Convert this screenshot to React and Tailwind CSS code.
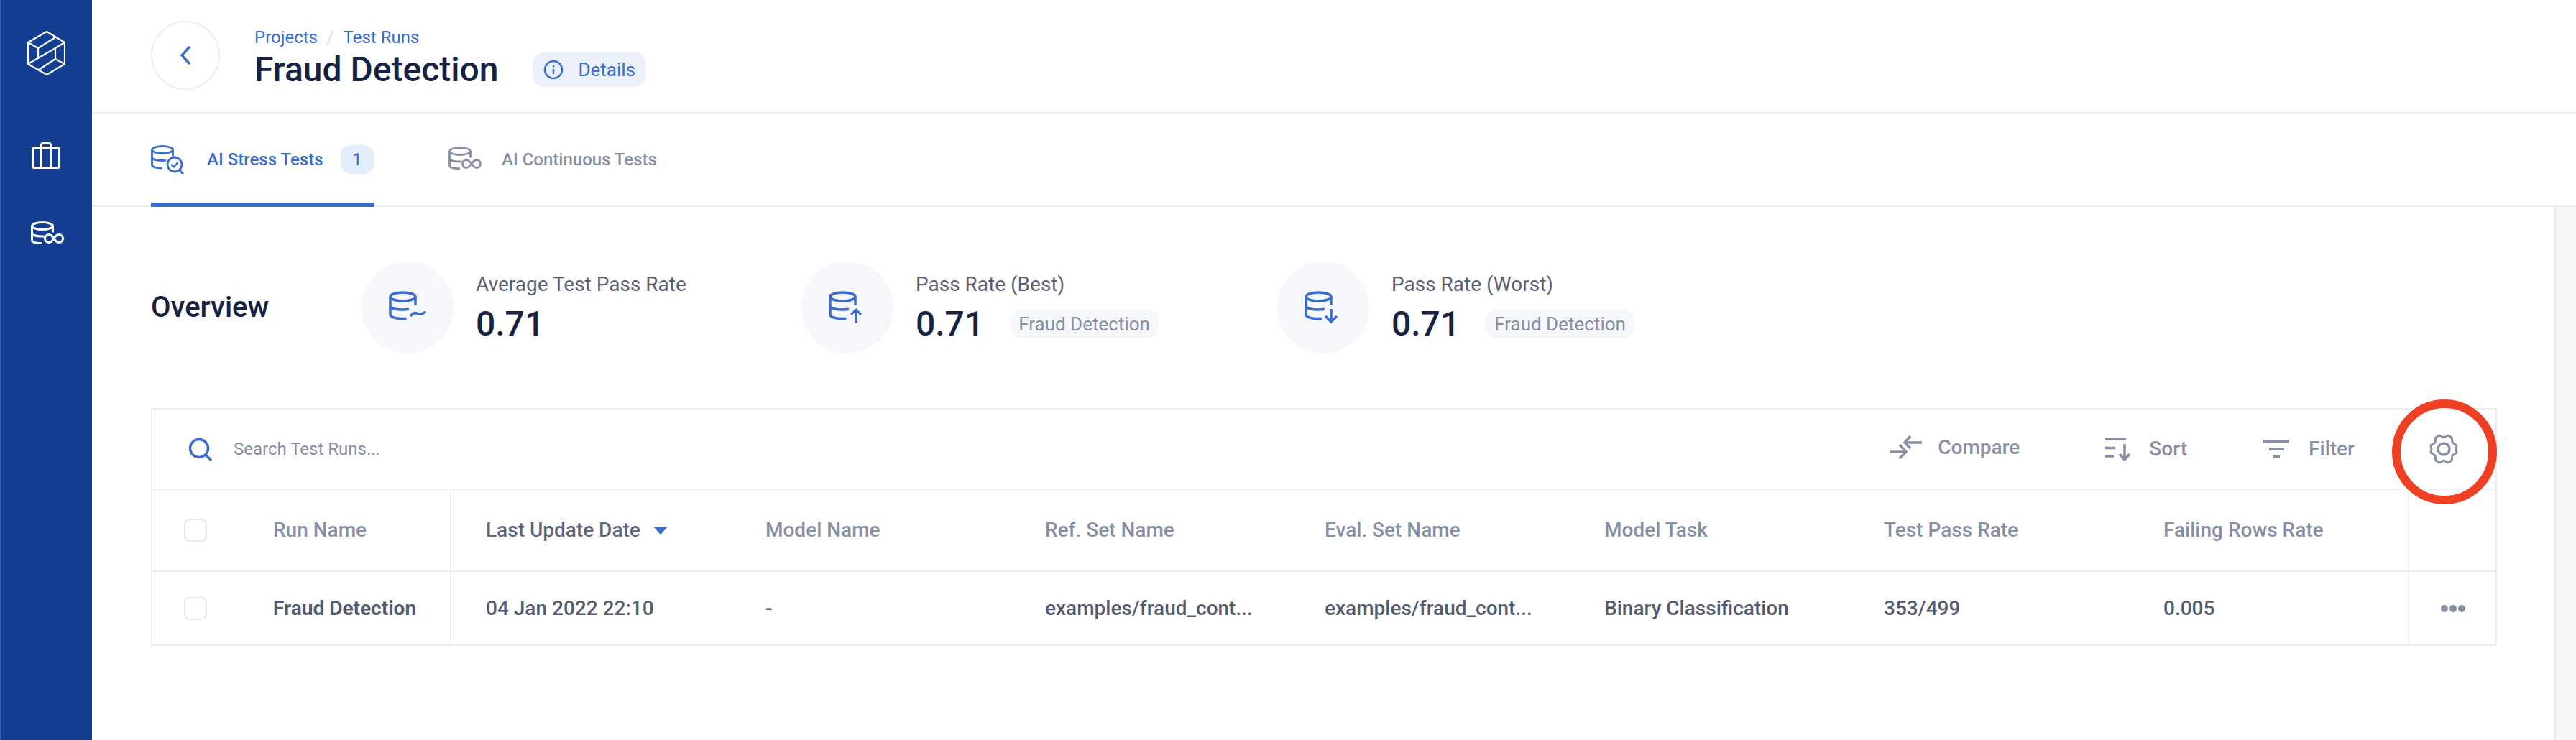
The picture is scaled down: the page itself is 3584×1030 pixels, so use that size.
import React from "react";

const BLUE = "#3A6CCB";
const GREY = "#878FA3";

function DbPaths({ color, sw = 3.5, s = 1 }) {
  return (
    <g fill="none" stroke={color} strokeWidth={sw} strokeLinecap="butt" transform={`scale(${s})`}>
      <ellipse cx="19.5" cy="10" rx="17.5" ry="6" />
      <path d="M2 10v25c0 3.400 8 5.600 17.500 5.600 2 0 3.500-.1 5-.3" />
      <path d="M37 10v12" />
      <path d="M2 22.500c0 3.400 8 5.600 17.500 5.600 3 0 6-.3 8.500-.8" />
    </g>
  );
}

function StatIcon({ kind }) {
  return (
    <svg width="52" height="50" viewBox="0 0 52 50">
      <DbPaths color={BLUE} />
      {kind === "avg" && <path d="M31 36c3-4 6-4 9-2.500s6 1.500 10-2" fill="none" stroke={BLUE} strokeWidth="3.500" strokeLinecap="round" />}
      {kind === "up" && <path d="M38 47V28M31 35l7-7 7 7" fill="none" stroke={BLUE} strokeWidth="3" />}
      {kind === "down" && <path d="M37 27v18M29 37l8 8 8-8" fill="none" stroke={BLUE} strokeWidth="3.500" />}
    </svg>
  );
}

function TabStressIcon() {
  return (
    <svg width="46" height="40" viewBox="0 0 46 40" fill="none" stroke={BLUE} strokeWidth="2.800" className="shrink-0">
      <ellipse cx="16" cy="6.500" rx="14.500" ry="5" />
      <path d="M1.500 6.500v21c0 2.700 6 4.500 14.500 4.500" />
      <path d="M30.500 6.500v9" />
      <path d="M1.500 17c0 2.700 6 4.500 14.500 4.500 2 0 3.500-.1 5-.4" />
      <circle cx="33" cy="27" r="10" />
      <path d="M40 35l5 5.500" />
      <path d="M28.500 27l3.500 3.500 5.500-6.500" strokeWidth="2.500" />
    </svg>
  );
}

function TabInfIcon({ color, sw = 2.800, className = "" }) {
  return (
    <svg width="46" height="32" viewBox="0 0 46 32" fill="none" stroke={color} strokeWidth={sw} className={`shrink-0 ${className}`}>
      <ellipse cx="16" cy="6.500" rx="14.500" ry="5" />
      <path d="M1.500 6.500v20c0 2.700 6 4.200 14.500 4.200" />
      <path d="M30.500 6.500v9" />
      <path d="M1.500 16.500c0 2.700 6 4.500 14.500 4.500 1 0 1.800 0 2.500-.1" />
      <path d="M32 24c-2.500-3.500-4-5.500-7-5.500a5.500 5.500 0 0 0 0 11c3 0 4.500-2 7-5.500s4-5.500 7-5.500a5.500 5.500 0 0 1 0 11c-3 0-4.500-2-7-5.500z" />
    </svg>
  );
}

function Logo() {
  return (
    <svg width="53" height="62" viewBox="-1 -1 53 62" fill="none" stroke="#fff" strokeWidth="2.200" strokeLinejoin="round">
      <path d="M26 0l25 15v30L26 60 0 45V15z" />
      <path d="M0 15l14 8v15M14 23L38 8M0 45L38 23l13-8M38 23v15l13 7M38 38L15 53" />
    </svg>
  );
}

function Briefcase() {
  return (
    <svg width="40" height="37" viewBox="0 0 40 37" fill="none" stroke="#fff" strokeWidth="3">
      <rect x="1.500" y="7.500" width="37" height="28" rx="2" />
      <path d="M13.500 7.500v28M26.500 7.500v28M13.500 7.500V4c0-1.500 1-2.500 2.500-2.500h8c1.500 0 2.500 1 2.500 2.500v3.500" />
    </svg>
  );
}

function Stat({ width, kind, label, pill }) {
  return (
    <div className="flex items-center shrink-0" style={{ width }}>
      <div className="w-[128px] h-[128px] rounded-full bg-[#F5F7FB] flex items-center justify-center shrink-0">
        <StatIcon kind={kind} />
      </div>
      <div className="ml-[31px] flex flex-col pt-[2px]">
        <div className="text-[28px] leading-[36px] text-[#5B6070]">{label}</div>
        <div className="flex items-center mt-[7px]">
          <span className="text-[48px] leading-[60px] font-medium text-[#172243]">0.71</span>
          {pill && (
            <span className="ml-[36px] h-[40px] px-[12px] rounded-[16px] bg-[#F5F7FB] text-[26px] leading-[40px] text-[#878FA3]">
              Fraud Detection
            </span>
          )}
        </div>
      </div>
    </div>
  );
}

function Checkbox() {
  return <div className="w-[32px] h-[32px] rounded-[8px] border-2 border-[#E4E8EF] bg-white shrink-0" />;
}

const columns = [
  { head: "Last Update Date", val: "04 Jan 2022 22:10", active: true },
  { head: "Model Name", val: "-" },
  { head: "Ref. Set Name", val: "examples/fraud_cont..." },
  { head: "Eval. Set Name", val: "examples/fraud_cont..." },
  { head: "Model Task", val: "Binary Classification" },
  { head: "Test Pass Rate", val: "353/499" },
];

export default function App() {
  return (
    <div className="flex w-[3584px] h-[1030px] bg-white overflow-hidden font-['Roboto',sans-serif]">
      <aside className="w-[128px] shrink-0 h-full bg-[#133E91] border-l-2 border-[#3A66AE] flex flex-col items-center">
        <div className="mt-[43px] -ml-[2px]"><Logo /></div>
        <div className="mt-[93px] -ml-[2px]"><Briefcase /></div>
        <div className="mt-[73px] ml-[1px]"><TabInfIcon color="#fff" sw={3} /></div>
      </aside>

      <main className="flex-1 flex flex-col min-w-0">
        <header className="h-[158px] shrink-0 border-b-2 border-[#E9EDF4] pl-[82px] flex items-start">
          <button className="mt-[29px] w-[96px] h-[96px] rounded-full border-2 border-[#E9EDF4] flex items-center justify-center shrink-0">
            <svg width="18" height="28" viewBox="0 0 18 28" fill="none" stroke={BLUE} strokeWidth="3.500">
              <path d="M15 2L4 14l11 12" />
            </svg>
          </button>
          <div className="ml-[48px] pt-[38px]">
            <div className="flex items-center text-[24px] leading-[28px] text-[#3A6CCB]">
              <span>Projects</span>
              <span className="mx-[12px] text-[#E1E5EC] text-[28px]">/</span>
              <span>Test Runs</span>
            </div>
            <div className="flex items-center mt-[3px]">
              <h1 className="text-[48px] leading-[56px] font-medium text-[#172243]">Fraud Detection</h1>
              <div className="ml-[48px] h-[48px] w-[158px] rounded-[16px] bg-[#EBF0FA] flex items-center pl-[15px] text-[26px] text-[#3A6CCB]">
                <svg width="28" height="28" viewBox="0 0 28 28" fill="none" stroke={BLUE} strokeWidth="2.500" className="shrink-0">
                  <circle cx="14" cy="14" r="12" />
                  <path d="M14 13v7M14 8v2.500" />
                </svg>
                <span className="ml-[20px]">Details</span>
              </div>
            </div>
          </div>
        </header>

        <nav className="h-[130px] shrink-0 border-b-2 border-[#E9EDF4] pl-[82px] flex">
          <div className="h-[130px] w-[310px] border-b-[6px] border-[#3A6CCB] flex items-center relative">
            <div className="flex items-center mt-[4px] w-full">
              <TabStressIcon />
              <span className="ml-[32px] text-[24px] font-medium text-[#3A6CCB]">AI Stress Tests</span>
              <span className="ml-auto w-[46px] h-[40px] rounded-[14px] bg-[#E3EEFC] text-[24px] leading-[40px] text-center text-[#3A6CCB]">1</span>
            </div>
          </div>
          <div className="ml-[104px] flex items-center h-[130px]">
            <div className="flex items-center -mt-[2px]">
              <TabInfIcon color={GREY} className="-mt-[4px]" />
              <span className="ml-[28px] text-[24px] font-medium text-[#878FA3]">AI Continuous Tests</span>
            </div>
          </div>
        </nav>

        <div className="flex-1 flex min-h-0">
          <section className="flex-1 min-w-0 pl-[82px] pr-[80px] pt-[76px]">
            <div className="flex items-center h-[128px]">
              <h2 className="w-[293px] shrink-0 text-[40px] font-medium text-[#172243]">Overview</h2>
              <Stat width={612} kind="avg" label="Average Test Pass Rate" />
              <Stat width={662} kind="up" label="Pass Rate (Best)" pill />
              <Stat width={600} kind="down" label="Pass Rate (Worst)" pill />
            </div>

            <div className="relative mt-[76px] border-2 border-[#E9EDF4]">
              <div className="h-[112px] border-b-2 border-[#E9EDF4] flex items-center">
                <svg width="34" height="33" viewBox="0 0 34 33" fill="none" stroke={BLUE} strokeWidth="3.500" className="ml-[50px] shrink-0">
                  <circle cx="15" cy="15" r="12.500" />
                  <path d="M24 24l8 8" />
                </svg>
                <span className="ml-[29px] text-[24px] text-[#878FA3]">Search Test Runs...</span>
                <div className="ml-auto flex items-center text-[28px] font-medium text-[#878FA3]">
                  <svg width="44" height="33" viewBox="0 0 44 33" fill="none" stroke={GREY} strokeWidth="3.500" className="shrink-0 -mt-[6px]">
                    <path d="M44 10H21M28 1l-8 9 8 8M0 23h22M13 13l9 10-9 9" />
                  </svg>
                  <span className="ml-[22px] -mt-[4px]">Compare</span>
                  <svg width="37" height="32" viewBox="0 0 37 32" fill="none" stroke={GREY} strokeWidth="3.500" className="ml-[119px] shrink-0">
                    <path d="M0 2h29M0 14.500h14M0 26h12M27 9v21M20 23l7 8 7-8" />
                  </svg>
                  <span className="ml-[24px]">Sort</span>
                  <svg width="36" height="26" viewBox="0 0 36 26" fill="none" stroke={GREY} strokeWidth="3.800" className="ml-[106px] shrink-0">
                    <path d="M0 2h36M8 13h21M13 24h10" />
                  </svg>
                  <span className="ml-[27px]">Filter</span>
                  <svg width="44" height="44" viewBox="0 0 44 44" fill="none" stroke={GREY} strokeWidth="3" className="ml-[102px] mr-[50px] shrink-0">
                    <path d="M16 3l6 3 6-3 5 3 1 7 6 4-1 5 1 5-6 4-1 7-5 3-6-3-6 3-5-3-1-7-6-4 1-5-1-5 6-4 1-7z" strokeLinejoin="round" />
                    <circle cx="22" cy="22" r="8" strokeWidth="3.500" />
                  </svg>
                </div>
              </div>

              <div className="h-[114px] border-b-2 border-[#E9EDF4] flex items-center text-[28px] font-medium text-[#878FA3]">
                <div className="w-[416px] h-full border-r-2 border-[#E9EDF4] flex items-center pl-[44px] shrink-0">
                  <Checkbox />
                  <span className="ml-[92px]">Run Name</span>
                </div>
                {columns.map((c) => (
                  <div key={c.head} className="w-[389px] shrink-0 pl-[48px] flex items-center">
                    <span className={c.active ? "text-[#5F6579]" : ""}>{c.head}</span>
                    {c.active && (
                      <svg width="20" height="11" viewBox="0 0 20 11" className="ml-[18px] shrink-0"><path d="M0 0h20L10 11z" fill={BLUE} /></svg>
                    )}
                  </div>
                ))}
                <div className="flex-1 pl-[48px] whitespace-nowrap">Failing Rows Rate</div>
                <div className="w-[122px] h-full border-l-2 border-[#E9EDF4] shrink-0" />
              </div>

              <div className="h-[101px] flex items-center text-[28px] font-medium text-[#555B6E]">
                <div className="w-[416px] h-full border-r-2 border-[#E9EDF4] flex items-center pl-[44px] shrink-0">
                  <Checkbox />
                  <span className="ml-[92px] font-bold">Fraud Detection</span>
                </div>
                {columns.map((c) => (
                  <div key={c.head} className="w-[389px] shrink-0 pl-[48px] whitespace-nowrap">{c.val}</div>
                ))}
                <div className="flex-1 pl-[48px]">0.005</div>
                <div className="w-[122px] h-full border-l-2 border-[#E9EDF4] shrink-0 flex items-center justify-center gap-[2px] pl-[2px]">
                  <span className="w-[10px] h-[10px] rounded-full bg-[#878FA3]" />
                  <span className="w-[10px] h-[10px] rounded-full bg-[#878FA3]" />
                  <span className="w-[10px] h-[10px] rounded-full bg-[#878FA3]" />
                </div>
              </div>

              <div className="absolute -top-[14px] -right-[2px] w-[146px] h-[146px] rounded-full border-[12px] border-[#EE4124]" />
            </div>
          </section>
          <div className="w-[30px] shrink-0 bg-[#F5F7F7] border-l-2 border-[#E9EDEE]" />
        </div>
      </main>
    </div>
  );
}
